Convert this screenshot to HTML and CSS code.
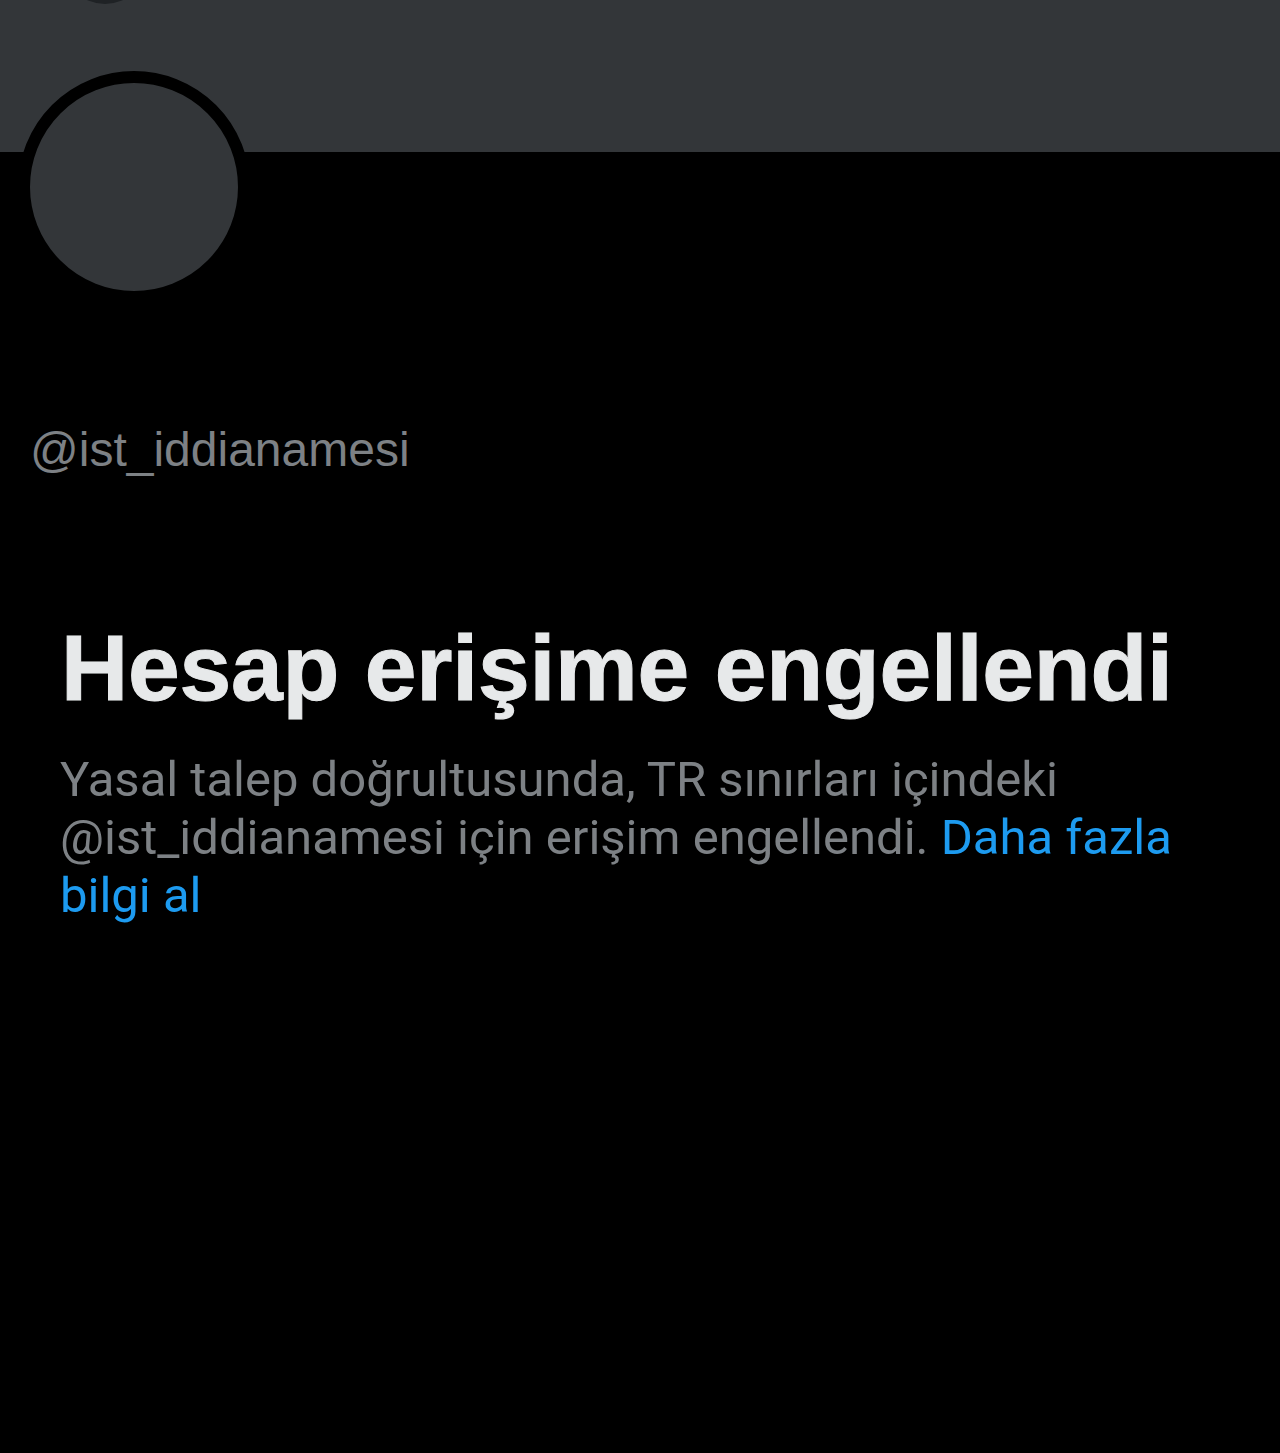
FILE: index.html
```html
<!DOCTYPE html>
<html lang="tr">
<head>
<meta charset="utf-8">
<title>Hesap erişime engellendi</title>
<link rel="stylesheet" href="styles.css">
</head>
<body>
<div class="page">
  <header class="banner">
    <div class="banner-dot"></div>
  </header>
  <div class="profile">
    <div class="avatar"></div>
    <div class="handle">@ist_iddianamesi</div>
    <h1 class="title">Hesap erişime engellendi</h1>
    <p class="desc">Yasal talep doğrultusunda, TR sınırları içindeki @ist_iddianamesi için erişim engellendi. <a class="link" href="#">Daha fazla bilgi al</a></p>
  </div>
</div>
</body>
</html>
```
FILE: styles.css
```css
html, body {
  margin: 0;
  padding: 0;
  background: #000;
}
.page {
  width: 1280px;
  min-height: 1453px;
  background: #000;
}
.banner {
  position: relative;
  height: 152px;
  background: #333639;
  overflow: hidden;
}
.banner-dot {
  position: absolute;
  left: 63px;
  top: -80px;
  width: 84px;
  height: 84px;
  border-radius: 50%;
  background: #1f2225;
}
.profile {
  display: flex;
  flex-direction: column;
  align-items: flex-start;
}
.avatar {
  position: relative;
  z-index: 1;
  width: 208px;
  height: 208px;
  border: 12px solid #000;
  border-radius: 50%;
  background: #333639;
  margin: -81px 0 0 18px;
}
.handle {
  margin-top: 119px;
  padding-left: 30px;
  font-family: "Liberation Sans", Arial, sans-serif;
  font-size: 48px;
  line-height: 56px;
  color: #7d8185;
}
.title {
  margin: 140px 0 0 0;
  padding-left: 61px;
  font-family: "Liberation Sans", Arial, sans-serif;
  font-weight: 700;
  font-size: 93px;
  line-height: 100px;
  color: #e7e9ea;
  letter-spacing: -0.2px;
  -webkit-text-stroke: 1px #e7e9ea;
}
.desc {
  margin: 33px 0 0 60px;
  width: 1120px;
  font-family: Roboto, "Liberation Sans", sans-serif;
  font-size: 49px;
  line-height: 58px;
  color: #7d8185;
}
.link {
  color: #1d9bf0;
  text-decoration: none;
}
```
